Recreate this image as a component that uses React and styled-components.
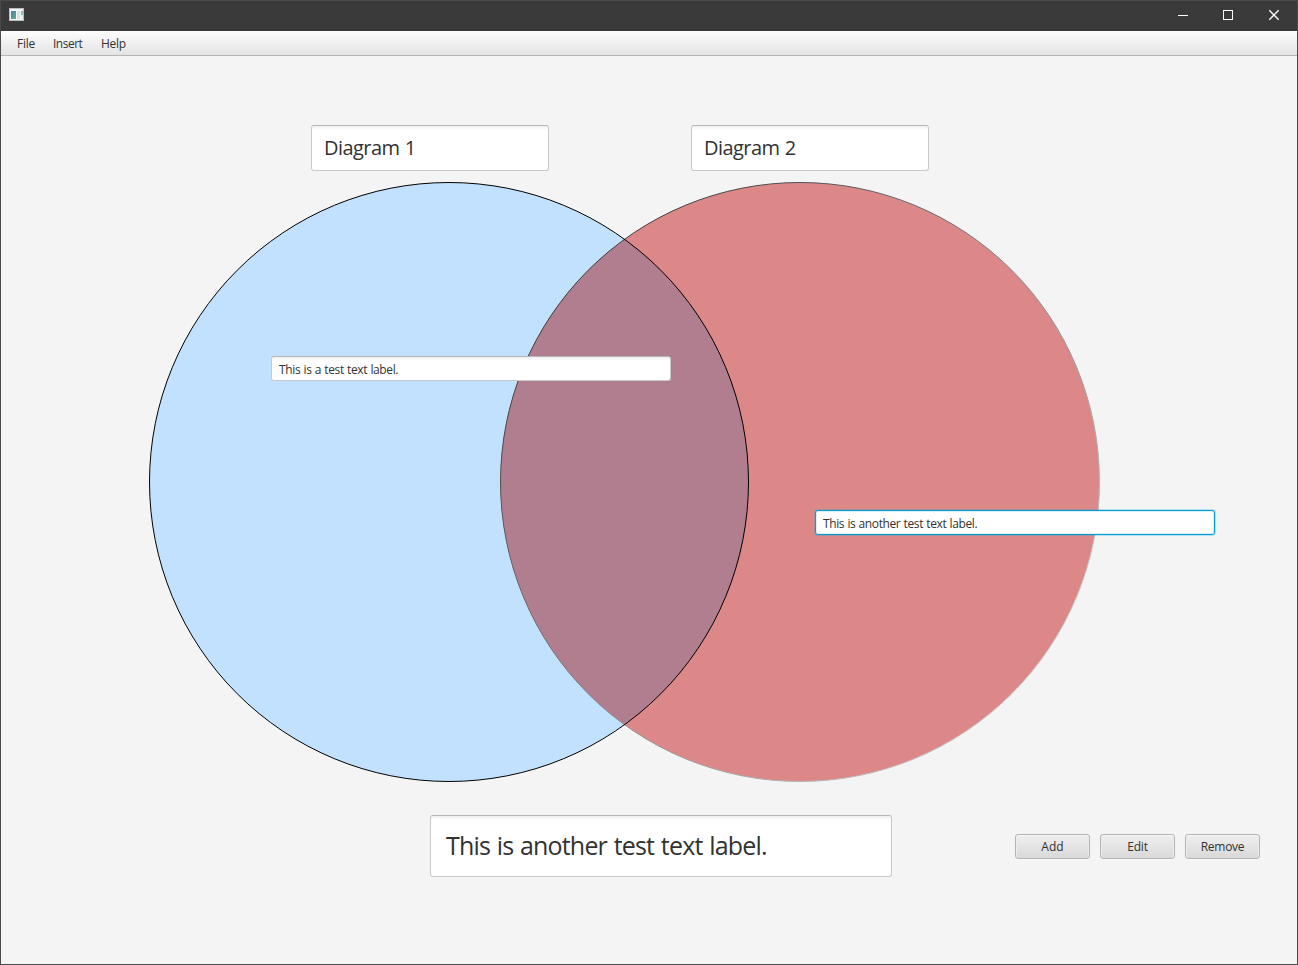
import React from "react";
import styled, { createGlobalStyle, css } from "styled-components";

const GlobalStyle = createGlobalStyle`
  * { box-sizing: border-box; }
  html, body { margin: 0; padding: 0; }
  body { font-family: "Open Sans", "Noto Sans", sans-serif; color: #323232; overflow: hidden; }
`;

const Window = styled.div`
  width: 1298px;
  height: 965px;
  display: flex;
  flex-direction: column;
  background: #f4f4f4;
  border: 1px solid #4a4a4a;
`;

const TitleBar = styled.header`
  height: 30px;
  flex: none;
  display: flex;
  align-items: center;
  justify-content: space-between;
  padding-left: 8px;
  background: #3a3a3a;
  svg { display: block; }
`;

const AppIcon = styled.svg`
  width: 15px;
  height: 13px;
  margin-bottom: 3px;
`;

const WindowControls = styled.div`
  display: flex;
`;

const ControlButton = styled.div`
  width: ${(p) => p.$width}px;
  height: 30px;
`;

const MenuBar = styled.nav`
  height: 25px;
  flex: none;
  display: flex;
  gap: 18px;
  padding-left: 16px;
  background: linear-gradient(#fdfdfd, #e3e3e3);
  border-bottom: 1px solid #b5b5b5;
`;

const MenuItem = styled.span`
  width: ${(p) => p.$width}px;
  font-size: 12px;
  line-height: 26px;
  letter-spacing: ${(p) => p.$spacing || 0}px;
  white-space: nowrap;
`;

const TitleRow = styled.div`
  display: flex;
  gap: 142px;
  padding: 69px 0 0 310px;
`;

const Stage = styled.section`
  position: relative;
  height: 600px;
  margin-top: 11px;
`;

const Diagram = styled.svg`
  display: block;
  width: 1296px;
  height: 602px;
`;

const focusRing = css`
  background: #fff;
  border-color: #039ed3;
  box-shadow: 0 0 0 1px rgba(3, 158, 211, 0.25), inset 0 0 0 1px #d9effa;
`;

const TextField = styled.div`
  width: ${(p) => p.$width}px;
  height: ${(p) => p.$height}px;
  padding-left: ${(p) => p.$pad}px;
  font-size: ${(p) => p.$size}px;
  line-height: ${(p) => p.$line}px;
  letter-spacing: ${(p) => p.$spacing}px;
  word-spacing: ${(p) => p.$words || 0}px;
  white-space: nowrap;
  background: linear-gradient(#f0f0f0, #ffffff 4px);
  border: 1px solid #c8c8c8;
  border-top-color: #b6b6b6;
  border-radius: 3px;
  ${(p) => p.$focused && focusRing}
`;

const PlacedField = styled(TextField)`
  position: absolute;
  left: ${(p) => p.$x}px;
  top: ${(p) => p.$y}px;
`;

const BottomRow = styled.footer`
  display: flex;
  align-items: center;
  padding: 33px 0 0 429px;
`;

const ButtonGroup = styled.div`
  display: flex;
  gap: 10px;
  margin-left: 123px;
`;

const Button = styled.button`
  width: 75px;
  height: 25px;
  padding: 1px 0 0;
  font: 12px/22px "Open Sans", "Noto Sans", sans-serif;
  letter-spacing: ${(p) => p.$spacing || 0}px;
  color: #323232;
  background: linear-gradient(#efefef, #d9d9d9);
  border: 1px solid #b3b3b3;
  border-radius: 3px;
  box-shadow: inset 0 1px 0 #f8f8f8, inset 1px 0 0 #ececec, inset -1px 0 0 #ececec, 0 1px 0 #fafafa;
`;

function VennCircles() {
  return (
    <Diagram viewBox="1 182 1296 602">
      <defs>
        <linearGradient id="edge" x1="0" y1="0" x2="1" y2="1">
          <stop offset="0" stopColor="#202020" />
          <stop offset="1" stopColor="#e4e4e4" />
        </linearGradient>
        <clipPath id="left">
          <circle cx="449" cy="482" r="299.5" />
        </clipPath>
      </defs>
      <circle cx="449" cy="482" r="299.5" fill="#c2e1ff" />
      <circle cx="800" cy="482" r="299.5" fill="#dd8888" />
      <circle cx="800" cy="482" r="299.5" fill="#b17e8f" clipPath="url(#left)" />
      <circle cx="800" cy="482" r="299.5" fill="none" stroke="url(#edge)" />
      <circle cx="449" cy="482" r="299.5" fill="none" stroke="#000" />
    </Diagram>
  );
}

export default function App() {
  return (
    <>
      <GlobalStyle />
      <Window>
        <TitleBar>
          <AppIcon viewBox="0 0 15 13">
            <defs>
              <linearGradient id="pane" x1="0" y1="0" x2="1" y2="1">
                <stop offset="0" stopColor="#4a78a8" />
                <stop offset="1" stopColor="#5cb58c" />
              </linearGradient>
            </defs>
            <rect width="15" height="13" fill="#b9bcbe" />
            <rect x="1" y="1" width="13" height="11" fill="#f3f4f5" />
            <rect x="2" y="3" width="5" height="8" fill="url(#pane)" />
            <rect x="8" y="3" width="3" height="8" fill="#dddfe2" />
            <rect x="12" y="3" width="2" height="4" fill="#8fbcae" />
            <rect x="12" y="7" width="2" height="4" fill="#e7eee9" />
          </AppIcon>
          <WindowControls>
            <ControlButton $width={45}>
              <svg width="45" height="30"><path d="M18 14.5H28" stroke="#fff" /></svg>
            </ControlButton>
            <ControlButton $width={46}>
              <svg width="46" height="30"><rect x="18.5" y="9.5" width="9" height="9" fill="none" stroke="#fff" /></svg>
            </ControlButton>
            <ControlButton $width={46}>
              <svg width="46" height="30"><path d="M18.3 9.3L27.7 18.7M27.7 9.3L18.3 18.7" stroke="#fff" strokeWidth="1.3" /></svg>
            </ControlButton>
          </WindowControls>
        </TitleBar>
        <MenuBar>
          <MenuItem $width={18} $spacing={-0.25}>File</MenuItem>
          <MenuItem $width={30} $spacing={-0.5}>Insert</MenuItem>
          <MenuItem $width={26} $spacing={-0.25}>Help</MenuItem>
        </MenuBar>
        <TitleRow>
          <TextField $width={238} $height={46} $pad={12} $size={20} $line={44} $spacing={-0.55} $words={0.5}>Diagram 1</TextField>
          <TextField $width={238} $height={46} $pad={12} $size={20} $line={44} $spacing={-0.55} $words={0.5}>Diagram 2</TextField>
        </TitleRow>
        <Stage>
          <VennCircles />
          <PlacedField $x={270} $y={174} $width={400} $height={25} $pad={7} $size={12} $line={25} $spacing={-0.37} $words={0.5}>
            This is a test text label.
          </PlacedField>
          <PlacedField $focused $x={814} $y={328} $width={400} $height={25} $pad={7} $size={12} $line={25} $spacing={-0.39} $words={0.5}>
            This is another test text label.
          </PlacedField>
        </Stage>
        <BottomRow>
          <TextField $width={462} $height={62} $pad={15} $size={25} $line={59} $spacing={-0.82} $words={1}>
            This is another test text label.
          </TextField>
          <ButtonGroup>
            <Button>Add</Button>
            <Button $spacing={-0.2}>Edit</Button>
            <Button $spacing={-0.25}>Remove</Button>
          </ButtonGroup>
        </BottomRow>
      </Window>
    </>
  );
}
